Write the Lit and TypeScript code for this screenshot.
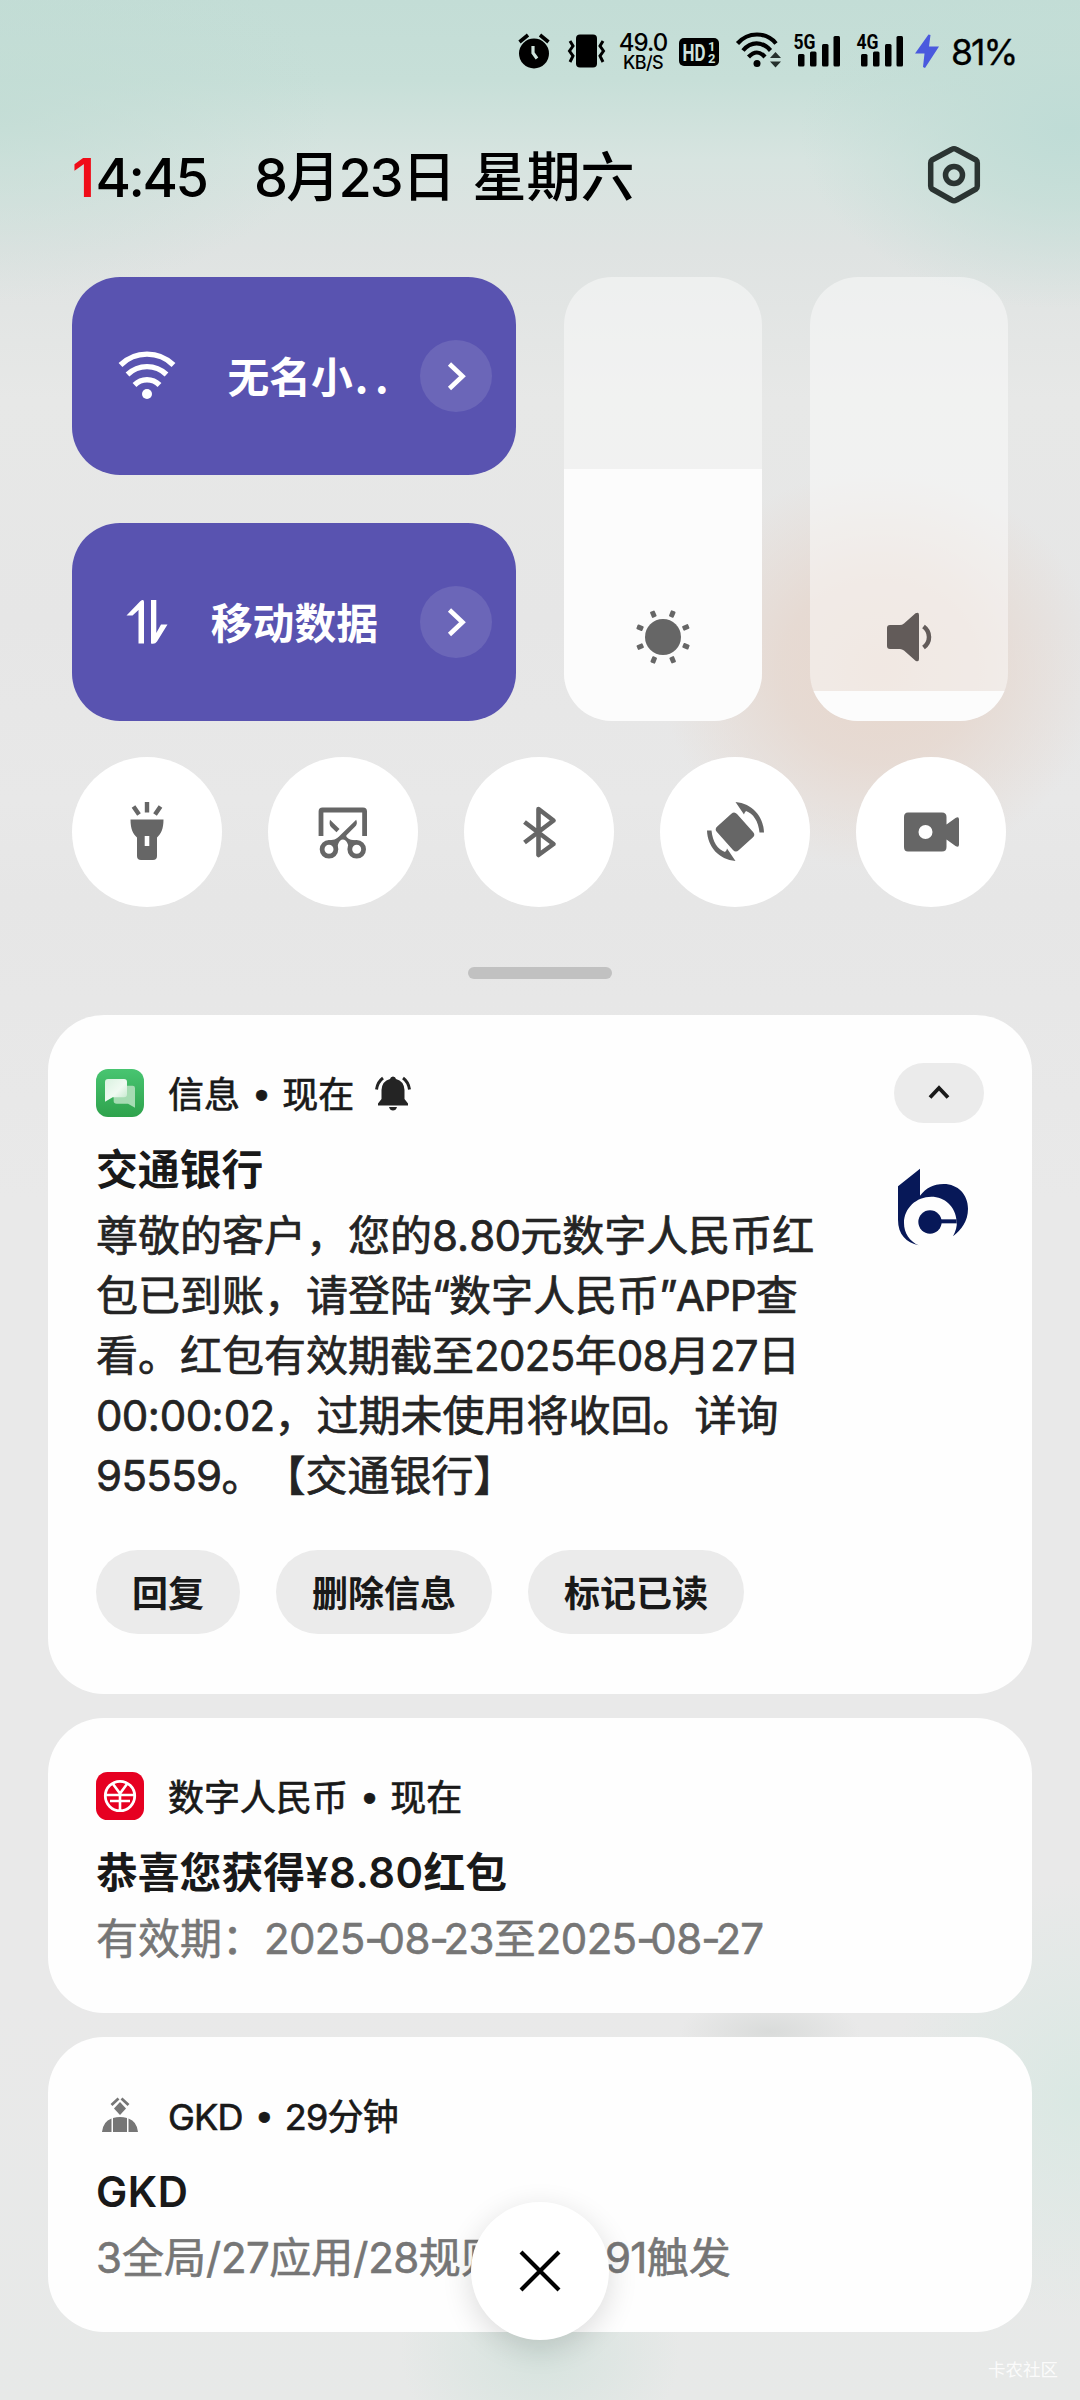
import { LitElement, html, svg, css, nothing } from "lit";
import type { TemplateResult } from "lit";
import { customElement, property } from "lit/decorators.js";
import { styleMap } from "lit/directives/style-map.js";

const wifi = html`<svg width="58" height="50" viewBox="0 0 58 50" fill="none" stroke="#fff" stroke-width="5.400">
  <path d="M2.500 14C17-.5 41-.5 55.500 14M9.500 23.500C20.500 13 37.500 13 48.500 23.500M16.500 34C23.500 27 34.500 27 41.500 34"/>
  <circle cx="29" cy="43" r="5" fill="#fff" stroke="none"/></svg>`;

const data = html`<svg width="58" height="50" viewBox="0 0 58 50" fill="#fff">
  <path d="M22 4.500Q26 1.500 26 5V46.500H20.500V13L14.500 18.500H8.500ZM33 3H38.300V36L43 27.500H49.500L39 44.500Q37 47.500 33 46.500Z"/></svg>`;

const chevron = html`<svg width="72" height="72" viewBox="0 0 72 72" fill="none" stroke="#fff" stroke-width="4.600">
  <path d="M29.500 24L42.500 36.300L29.500 48.500"/></svg>`;

const gear = html`<svg class="gear" width="60" height="64" viewBox="0 0 60 64" fill="none" stroke="#2b3432" stroke-width="5.500" stroke-linejoin="round">
  <path d="M27.500 6.500Q30 5 32.500 6.500L52 17Q53.300 18 53.300 20V43Q53.300 45 52 46L32.500 57Q30 58.500 27.500 57L8 46Q6.700 45 6.700 43V20Q6.700 18 8 17Z"/>
  <circle cx="30" cy="32" r="8.500"/></svg>`;

const sun = html`<svg width="60" height="60" viewBox="0 0 60 60" fill="#666">
  <circle cx="30" cy="30" r="18"/>
  ${[22, 67, 112, 157, 202, 247, 292, 337].map(
    (a) => svg`<rect x="-2.500" y="-28" width="5" height="6.500" rx="1" transform="translate(30 30) rotate(${a})"/>`,
  )}</svg>`;

const speaker = html`<svg width="60" height="60" viewBox="0 0 60 60" fill="#625b59">
  <path d="M11 18H21Q23 18 25 16.500L36.500 6.300Q40 4.500 40 8V52Q40 55.500 36.500 53.700L25 43.500Q23 42 21 42H11Q8 42 8 39V21Q8 18 11 18Z"/>
  <path d="M44.500 19.500Q50 23.500 50 30T44.500 40.500" fill="none" stroke="#625b59" stroke-width="4.500"/></svg>`;

const torch = html`<svg width="70" height="70" viewBox="0 0 70 70" fill="#666">
  <path fill-rule="evenodd" d="M18.500 22.500H51.500C51.500 32 49 37 45 40.500V59Q45 63 41 63H29Q25 63 25 59V40.500C21 37 18.500 32 18.500 22.500ZM32.700 39V49H37.300V39Z"/>
  <path d="M35 5V15.500M21.500 9.500L27 17.500M48.500 9.500L43 17.500" stroke="#666" stroke-width="4.400"/></svg>`;

const shot = html`<svg width="70" height="70" viewBox="0 0 70 70" fill="none" stroke="#666" stroke-width="4.800">
  <path d="M13 39V14.500Q13 13 14.500 13H55Q56.600 13 56.600 14.500V39"/>
  <circle cx="21" cy="52.300" r="6.900"/><circle cx="48.700" cy="52.300" r="6.900"/>
  <path fill="#666" stroke="none" d="M48.200 22.700C49.500 26 49 27.800 46.700 30L38.500 38.300C37.500 39.500 39.500 41.500 43 42.800L49 43.500L49 46L43 48.500L41 53C40.300 47 39 43 34.800 42.500C31 43 29.700 47 29 53L26.500 48.500L20.500 46V43.500L26.500 42.500C28.500 42 30.500 40 32.500 38Z"/>
  <path fill="#666" stroke="none" d="M22 22.700L31.500 32L28.500 35.200L23 30Q20.800 27.500 22 22.700Z"/></svg>`;

const bluetooth = html`<svg width="70" height="70" viewBox="0 0 70 70" fill="none" stroke="#666" stroke-width="4.600" stroke-linejoin="round">
  <path d="M20.500 25L49.500 47L34.500 58V12L49.500 23.500L20.500 45.500"/></svg>`;

const arc = "M35.500 5C52 6.500 63.500 19 64 35.500H59.500C58.500 24 53 16.500 46 14Q44 16 44 17.500Z";
const rotate = html`<svg width="70" height="70" viewBox="0 0 70 70" fill="#666">
  <rect x="19" y="21.500" width="32" height="27" rx="4" transform="rotate(48 35 35)"/>
  <path d=${arc}/>
  <path d=${arc} transform="rotate(180 35.500 34.500)"/></svg>`;

const camera = html`<svg width="70" height="70" viewBox="0 0 70 70" fill="#666">
  <path fill-rule="evenodd" d="M12 15.500H46Q50.500 15.500 50.500 20V27.500L59.500 21Q63 19 63 22.500V47.500Q63 51 59.500 49L50.500 42.500V50Q50.500 54.500 46 54.500H12Q8 54.500 8 50V20Q8 15.500 12 15.500ZM29.500 28A7 7 0 1 0 29.500 42A7 7 0 1 0 29.500 28Z"/></svg>`;

const messages = html`<svg width="48" height="48" viewBox="0 0 144 144">
  <defs>
    <linearGradient id="g" x1="0" y1="0" x2="0" y2="1"><stop offset="0" stop-color="#48c571"/><stop offset="1" stop-color="#2ea24c"/></linearGradient>
    <linearGradient id="w" x1="0" y1="0" x2="1" y2="1"><stop offset="0" stop-color="#d9f2e0"/><stop offset=".55" stop-color="#f0faf2"/><stop offset="1" stop-color="#bfe6c9"/></linearGradient>
  </defs>
  <rect width="144" height="144" rx="36" fill="url(#g)"/>
  <path d="M60 50H110Q117 50 117 57V116L96 104H62Q53 104 53 96V57Z" fill="#a6dcb3"/>
  <path d="M36 30H84Q93 30 93 39V76Q93 85 84 85H50L27 98V39Q27 30 36 30Z" fill="url(#w)"/></svg>`;

const ecny = html`<svg width="48" height="48" viewBox="0 0 48 48" fill="none" stroke="#fff" stroke-width="2.800">
  <rect width="48" height="48" rx="11.500" fill="#e60021" stroke="none"/>
  <circle cx="24" cy="24" r="14.700"/>
  <path d="M17 12L24 21.500L31 12M24 21.500V38.500M10 23H38M14 29H34" stroke-width="2.600"/></svg>`;

const gkd = html`<svg width="48" height="48" viewBox="0 0 48 48" fill="#767676">
  <path d="M24 11L30 17.500L24 24L18 17.500Z"/>
  <path d="M22.500 7.500L15.500 14M25.500 7.500L32.500 14" stroke="#767676" stroke-width="2.800"/>
  <path d="M6 41Q7 30.500 15.500 27.500V41ZM17 27Q24 25 31 27V41H17ZM32.500 27.500Q41 30.500 42 41H32.500Z"/></svg>`;

const bell = html`<svg class="bell" width="38" height="36" viewBox="0 0 38 36" fill="#242424">
  <path d="M19 1.500Q21.500 1.500 22 4Q30 6 30.500 15V24L34 28.500V30.500H4V28.500L7.500 24V15Q8 6 16 4Q16.500 1.500 19 1.500ZM15 32H23Q22 35.500 19 35.500T15 32Z"/>
  <path d="M2.500 14.500Q3.500 7 9 3M35.500 14.500Q34.500 7 29 3" fill="none" stroke="#242424" stroke-width="3"/></svg>`;

const bankLogo = html`<svg class="logo" width="74" height="80" viewBox="32 352 222 240" fill="#071858">
  <path d="M35 410L101 357V438C120 415 140 403 172 403C215 403 245 435 245 477C245 515 225 540 200 560C208 545 213 530 211 515C208 470 175 441 135 441C90 441 53 475 53 520C53 550 70 575 97 587C60 578 35 555 35 510Z"/>
  <circle cx="131" cy="517" r="35"/><path d="M160 509H211V521H160Z"/></svg>`;

@customElement("status-bar")
class StatusBar extends LitElement {
  static styles = css`
    :host {
      display: flex;
      align-items: flex-start;
      height: 104px;
      padding: 32px 0 0 516px;
      box-sizing: border-box;
      color: #000;
      font-family: "Inter", "Noto Sans CJK SC", sans-serif;
    }
    svg { flex: none; display: block; overflow: visible; }
    .speed {
      width: 56px;
      margin: 0 6px 0 -1px;
      text-align: center;
      font-weight: 500;
      white-space: nowrap;
    }
    .rate { font-size: 24px; line-height: 22px; letter-spacing: -1px; }
    .unit { font-size: 18px; line-height: 18px; letter-spacing: -0.6px; }
    .battery { font-size: 35.5px; line-height: 41px; letter-spacing: -1.900px; margin-left: 8px; -webkit-text-stroke: 0.3px currentColor; }
    .hd { font: 700 23px/1 "Roboto", sans-serif; }
    .sub { font: 700 13px/1 "Roboto", sans-serif; }
    .net { font: 700 20.5px/1 "Roboto", sans-serif; }
  `;

  private bars(label: string) {
    return html`<svg width="63" height="38" viewBox="0 0 63 38">
      <text class="net" x="0.500" y="17" textLength="22" lengthAdjust="spacingAndGlyphs">${label}</text>
      <rect x="5" y="22" width="6.500" height="12.500" rx="1.500"/>
      <rect x="17" y="19.500" width="6.500" height="15" rx="1.500"/>
      <rect x="29" y="12" width="6.500" height="22.500" rx="1.500"/>
      <rect x="40.500" y="4" width="6.500" height="30.500" rx="1.500"/></svg>`;
  }

  render() {
    return html`
      <svg width="52" height="38" viewBox="0 0 52 38">
        <circle cx="18" cy="21.500" r="15"/>
        <path d="M3.500 10L12 3M32.500 10L24 3" stroke="#000" stroke-width="3.600"/>
        <path d="M17 14V21L21 26.500" fill="none" stroke="#cfe3dd" stroke-width="3.200"/></svg>
      <svg width="48" height="38" viewBox="0 0 48 38">
        <rect x="8" y="2.500" width="21" height="33" rx="4"/>
        <path d="M2 9L5 14L1.500 19L5 24L2 30M35 9L32 14L35.500 19L32 24L35 30" fill="none" stroke="#000" stroke-width="3"/></svg>
      <div class="speed"><div class="rate">49.0</div><div class="unit">KB/S</div></div>
      <svg width="59" height="38" viewBox="0 0 59 38">
        <rect x="2" y="6" width="40" height="28" rx="5"/>
        <g fill="#cfe3dd"><text class="hd" x="5.500" y="28.500" textLength="23" lengthAdjust="spacingAndGlyphs">HD</text>
        <text class="sub" x="31" y="18.500">1</text>
        <text class="sub" x="31" y="31">2</text></g></svg>
      <svg width="57" height="38" viewBox="0 0 57 38">
        <path d="M1.500 11.500C12-.5 30-.5 40 11.500M7 18.500C15 9 26 9 34.500 18.500M12.500 25Q21 16 29 25" fill="none" stroke="#000" stroke-width="4.200"/>
        <circle cx="21" cy="31.500" r="3.500"/>
        <path d="M34 26L39.500 20L45 26ZM34 29.500H45L39.500 35.500Z" fill="#26302d"/></svg>
      ${this.bars("5G")}${this.bars("4G")}
      <svg width="24" height="38" viewBox="4 0 24 38"><path d="M13.500 2.500L0 21.500H9.500L8 35L10 36L24 14.500H14L15.500 3Z" fill="#4a59de"/></svg>
      <div class="battery">81%</div>`;
  }
}

@customElement("toggle-tile")
class ToggleTile extends LitElement {
  @property({ attribute: false }) icon: TemplateResult | typeof nothing = nothing;
  @property() label = "";

  static styles = css`
    :host {
      display: flex;
      align-items: center;
      height: 198px;
      padding: 0 24px 0 46px;
      box-sizing: border-box;
      border-radius: 48px;
      background: #5953b0;
      color: #fff;
      font-family: "Noto Sans CJK SC", sans-serif;
    }
    svg { display: block; }
    .label {
      flex: 1;
      padding: 0 42px 3px 0;
      text-align: right;
      font-size: 41.8px;
      font-weight: 700;
      line-height: 60px;
      white-space: nowrap;
    }
    .dots { letter-spacing: 6.5px; margin: 0 -17px 0 2px; }
    .more { width: 72px; height: 72px; border-radius: 50%; background: #6b66b8; }
  `;

  render() {
    const dotted = this.label.endsWith("..");
    return html`${this.icon}
      <div class="label">${dotted ? this.label.slice(0, -2) : this.label}${dotted ? html`<span class="dots">..</span>` : nothing}</div>
      <div class="more">${chevron}</div>`;
  }
}

@customElement("level-slider")
class LevelSlider extends LitElement {
  @property({ attribute: false }) icon: TemplateResult | typeof nothing = nothing;
  @property({ type: Number }) level = 0;

  static styles = css`
    :host { display: block; }
    .track {
      display: grid;
      height: 444px;
      border-radius: 48px;
      overflow: hidden;
      background: rgba(255, 255, 255, 0.44);
    }
    .fill { grid-area: 1 / 1; align-self: end; background: #fcfcfc; }
    .icon { grid-area: 1 / 1; align-self: end; justify-self: center; height: 60px; padding-bottom: 54px; }
    svg { display: block; }
  `;

  render() {
    return html`<div class="track">
      <div class="fill" style=${styleMap({ height: `${this.level}px` })}></div>
      <div class="icon">${this.icon}</div>
    </div>`;
  }
}

@customElement("notice-card")
class NoticeCard extends LitElement {
  @property({ attribute: false }) icon: TemplateResult | typeof nothing = nothing;
  @property() app = "";
  @property() time = "";
  @property() heading = "";
  @property({ attribute: false }) lines: string[] = [];
  @property({ attribute: false }) actions: string[] = [];
  @property({ type: Boolean }) expanded = false;

  static styles = css`
    :host {
      display: flex;
      align-items: flex-start;
      justify-content: space-between;
      box-sizing: border-box;
      padding: 48px;
      border-radius: 56px;
      background: #fefefe;
      color: #191919;
      font-family: "Inter", "Noto Sans CJK SC", sans-serif;
      text-spacing-trim: space-all;
      white-space: nowrap;
    }
    svg { display: block; }
    .head { display: flex; align-items: center; height: 60px; }
    .source {
      display: flex;
      margin-left: 24px;
      padding-top: 3px;
      font-size: 36px;
      line-height: 60px;
      -webkit-text-stroke: 0.7px currentColor;
    }
    .source.latin { letter-spacing: -0.800px; }
    .dot { margin: -2px 11px 0 12px; font-size: 34px; letter-spacing: 0; }
    .bell { margin-left: 20px; }
    .heading { margin-top: 17px; font-size: 41.8px; font-weight: 600; line-height: 60px; }
    .heading .run { letter-spacing: 0.5px; }
    .line {
      font-size: 42px;
      line-height: 60px;
      color: #242424;
      -webkit-text-stroke: 0.7px currentColor;
    }
    .line .num { letter-spacing: -0.65px; }
    .line .dash { letter-spacing: -5.300px; margin-left: -0.200px; }
    .line .quote { letter-spacing: -1.500px; }
    .line .word { letter-spacing: -1px; }
    .line .ones { letter-spacing: 5.500px; }
    .body { margin-top: 6px; }
    .muted .line { color: #767676; -webkit-text-stroke-width: 0.6px; }
    .actions { display: flex; gap: 36px; margin-top: 44px; }
    .action {
      height: 84px;
      padding: 0 36px;
      border-radius: 42px;
      background: #ebebeb;
      font-size: 36px;
      font-weight: 700;
      line-height: 88px;
    }
    .side { display: flex; flex-direction: column; align-items: center; width: 90px; }
    .fold { width: 90px; height: 60px; border-radius: 30px; background: #ebebeb; }
    .logo { margin: 44px 0 0 -10px; }
  `;

  private runs(text: string) {
    return text
      .split(/(\d{4}(?=-)|-|[“”]|[A-Z]+|(?<=\/)11(?=\d)|\d\d+)/)
      .filter((part) => part)
      .map((part) => {
        if (part === "-") return html`<span class="dash">${part}</span>`;
        if (part === "11") return html`<span class="ones">${part}</span>`;
        if (/^[“”]$/.test(part)) return html`<span class="quote">${part}</span>`;
        if (/^[A-Z]+$/.test(part)) return html`<span class="word">${part}</span>`;
        if (/^\d+$/.test(part)) return html`<span class="num">${part}</span>`;
        return part;
      });
  }

  render() {
    const latin = /^[A-Z]+$/.test(this.app);
    return html`
      <div>
        <div class="head">${this.icon}
          <div class="source ${latin ? "latin" : ""}">${this.app}<span class="dot">•</span>${this.time}</div>
          ${this.expanded ? bell : nothing}
        </div>
        <div class="heading">${this.heading
          .split(/([\x20-\x7e¥]+)/)
          .map((part, i) => (i % 2 ? html`<span class="run">${part}</span>` : part))}</div>
        <div class="body ${this.expanded ? "" : "muted"}">
          ${this.lines.map((l) => html`<div class="line">${this.runs(l)}</div>`)}
        </div>
        ${this.actions.length
          ? html`<div class="actions">${this.actions.map((a) => html`<div class="action">${a}</div>`)}</div>`
          : nothing}
      </div>
      ${this.expanded
        ? html`<div class="side">
            <div class="fold"><svg width="90" height="60" viewBox="0 0 90 60" fill="none" stroke="#191919" stroke-width="3.800"><path d="M36 34.500L45 25L54 34.500"/></svg></div>
            ${bankLogo}
          </div>`
        : nothing}`;
  }
}

@customElement("app-root")
class AppRoot extends LitElement {
  static styles = css`
    :host {
      display: block;
      position: relative;
      width: 1080px;
      height: 2400px;
      overflow: hidden;
      font-family: "Inter", "Noto Sans CJK SC", sans-serif;
      background:
        radial-gradient(ellipse 270px 180px at 1070px 130px, #bfdcd6 0%, rgba(194, 221, 214, 0.75) 40%, rgba(194, 221, 214, 0) 100%),
        radial-gradient(ellipse 330px 190px at 0 110px, rgba(193, 220, 212, 0.75) 0%, rgba(193, 220, 212, 0) 100%),
        radial-gradient(ellipse 220px 200px at 880px 670px, #e7d7cd 0%, rgba(230, 215, 206, 0.8) 45%, rgba(230, 224, 221, 0) 100%),
        radial-gradient(ellipse 190px 220px at 1080px 2100px, rgba(218, 232, 227, 1) 0%, rgba(218, 232, 227, 0) 100%),
        radial-gradient(ellipse 140px 120px at 540px 2350px, rgba(214, 227, 222, 1) 0%, rgba(218, 230, 226, 0) 100%),
        radial-gradient(ellipse 90px 34px at 770px 2032px, #d9dbda 0%, rgba(217, 219, 218, 0) 100%),
        linear-gradient(180deg, #c3ddd6 0, #c7dfd8 80px, #d7e4e0 160px, #dfe3e2 250px, #e7e8e7 400px, #e6e6e6 620px, #e8e8e8 800px, #e6e6e6 900px, #e9e9e9 1200px, #e9e9e9 2000px, #e7e9e8 2400px);
    }
    svg { display: block; }
    .title {
      display: flex;
      align-items: center;
      height: 143px;
      padding: 0 96px 0 72px;
      font-size: 54px;
      font-weight: 500;
      line-height: 72px;
      white-space: nowrap;
      color: #000;
      margin-bottom: 30px;
    }
    .clock { width: 183px; letter-spacing: -2.400px; padding-top: 4px; }
    .first { color: #f00c18; font-weight: 600; margin-right: 3px; }
    .date { flex: 1; padding-top: 4px; margin-left: -1px; }
    .day { letter-spacing: -1.800px; margin-right: 4px; }
    .gear { margin: -2px 0 0; }
    .controls {
      display: grid;
      grid-template-columns: 444px 198px 198px;
      gap: 48px;
      padding: 0 72px;
    }
    .tiles { display: flex; flex-direction: column; gap: 48px; }
    .round { display: flex; gap: 46px; padding: 36px 72px 0; }
    .knob {
      display: flex;
      align-items: center;
      justify-content: center;
      width: 150px;
      height: 150px;
      border-radius: 50%;
      background: #fff;
    }
    .handle { width: 144px; height: 12px; margin: 60px auto 36px; border-radius: 6px; background: #c1c1c1; }
    .notices { display: flex; flex-direction: column; gap: 24px; padding: 0 48px; }
    .tall { height: 679px; }
    .short { height: 295px; }
    .close {
      position: absolute;
      left: 471px;
      top: 2202px;
      width: 138px;
      height: 138px;
      border-radius: 50%;
      background: #fff;
      box-shadow: 0 8px 30px rgba(0, 0, 0, 0.14);
    }
    .mark {
      position: absolute;
      right: 22px;
      bottom: 17px;
      font-size: 17.5px;
      line-height: 26px;
      color: rgba(255, 255, 255, 0.85);
    }
  `;

  render() {
    return html`
      <status-bar></status-bar>
      <div class="title">
        <div class="clock"><span class="first">1</span>4:45</div>
        <div class="date"><span class="day">8月23日</span> 星期六</div>
        ${gear}
      </div>
      <div class="controls">
        <div class="tiles">
          <toggle-tile .icon=${wifi} label="无名小.."></toggle-tile>
          <toggle-tile .icon=${data} label="移动数据"></toggle-tile>
        </div>
        <level-slider .icon=${sun} level="252"></level-slider>
        <level-slider .icon=${speaker} level="30"></level-slider>
      </div>
      <div class="round">
        ${[torch, shot, bluetooth, rotate, camera].map((i) => html`<div class="knob">${i}</div>`)}
      </div>
      <div class="handle"></div>
      <div class="notices">
        <notice-card class="tall" expanded .icon=${messages} app="信息" time="现在" heading="交通银行"
          .lines=${[
            "尊敬的客户，您的8.80元数字人民币红",
            "包已到账，请登陆“数字人民币”APP查",
            "看。红包有效期截至2025年08月27日",
            "00:00:02，过期未使用将收回。详询",
            "95559。【交通银行】",
          ]}
          .actions=${["回复", "删除信息", "标记已读"]}></notice-card>
        <notice-card class="short" .icon=${ecny} app="数字人民币" time="现在" heading="恭喜您获得¥8.80红包"
          .lines=${["有效期：2025-08-23至2025-08-27"]}></notice-card>
        <notice-card class="short" .icon=${gkd} app="GKD" time="29分钟" heading="GKD"
          .lines=${["3全局/27应用/28规则组/1191触发"]}></notice-card>
      </div>
      <div class="close"><svg width="138" height="138" viewBox="0 0 138 138" stroke="#000" stroke-width="4.200"><path d="M50 50L88 88M88 50L50 88"/></svg></div>
      <div class="mark">卡农社区</div>`;
  }
}
